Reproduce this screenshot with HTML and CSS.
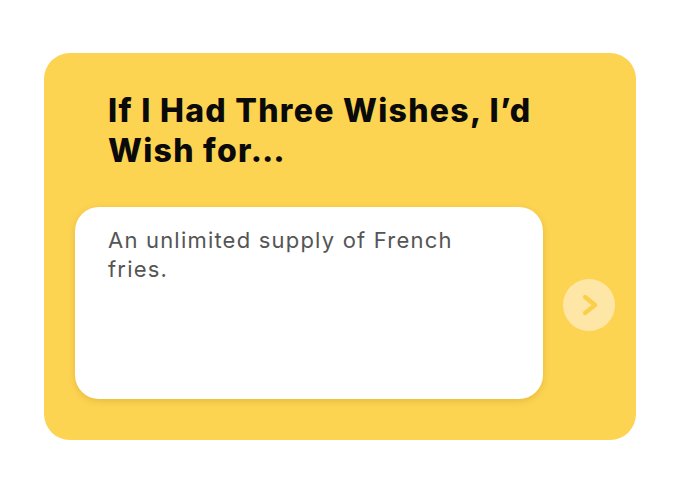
FILE: index.html
```html
<!DOCTYPE html>
<html>
<head>
<meta charset="utf-8">
<link rel="stylesheet" href="styles.css">
</head>
<body>
<div class="card">
  <h1 class="title">If I Had Three Wishes, I’d Wish for…</h1>
  <div class="row">
    <div class="answer"><p class="answer-text">An unlimited supply of French fries.</p></div>
    <button class="next" aria-label="Next">
      <svg width="26" height="26" viewBox="0 0 26 26"><path d="M9 5 L19 13 L9 21" fill="none" stroke="#FBCF4A" stroke-width="4.4" stroke-linecap="round" stroke-linejoin="round"/></svg>
    </button>
  </div>
</div>
</body>
</html>
```
FILE: styles.css
```css
html, body {
  margin: 0;
  padding: 0;
  background: #ffffff;
}
body {
  font-family: "Inter", "Open Sans", sans-serif;
}
.card {
  margin: 53px 0 0 44px;
  width: 592px;
  height: 387px;
  box-sizing: border-box;
  background: #FDD352;
  border-radius: 26px;
  padding: 38px 21px 0 31px;
}
.title {
  margin: 0 0 0 33px;
  font-size: 32px;
  line-height: 40px;
  font-weight: 800;
  color: #0a0a0a;
  width: 450px;
  letter-spacing: 1.3px;
}
.row {
  margin-top: 36px;
  display: flex;
  align-items: center;
  gap: 20px;
}
.answer {
  width: 468px;
  height: 192px;
  box-sizing: border-box;
  background: #ffffff;
  border-radius: 24px;
  box-shadow: 0 2px 6px rgba(160, 120, 0, 0.25);
  padding: 19px 33px;
}
.answer-text {
  margin: 0;
  max-width: 365px;
  font-size: 22px;
  line-height: 29px;
  color: #555555;
  letter-spacing: 1.2px;
}
.next {
  width: 52px;
  height: 52px;
  border-radius: 50%;
  border: none;
  padding: 0;
  background: #FEE7A6;
  display: flex;
  align-items: center;
  justify-content: center;
  margin-top: 4px;
}
```
